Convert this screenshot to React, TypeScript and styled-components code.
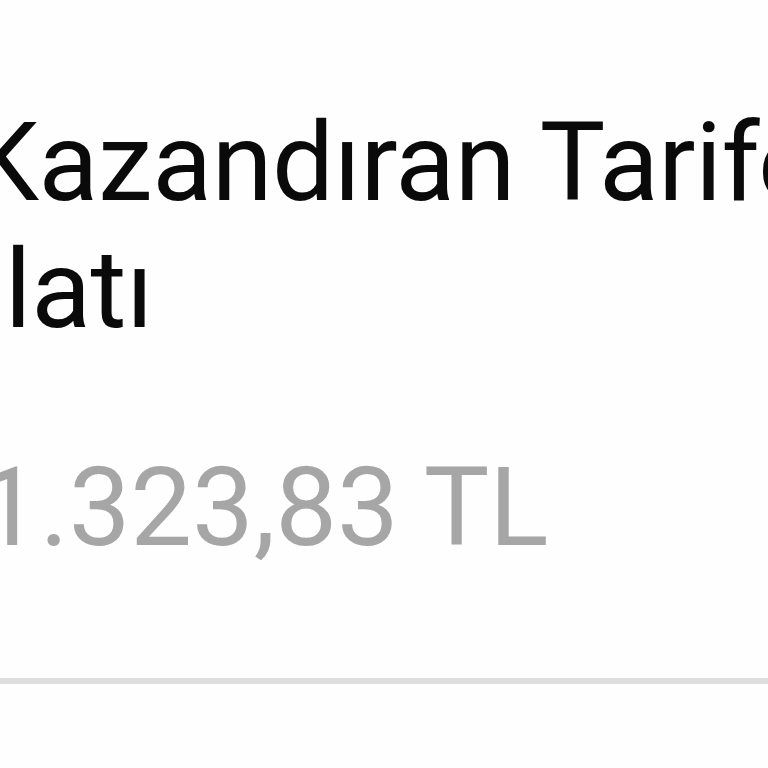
import React from 'react';
import styled, { createGlobalStyle } from 'styled-components';

const GlobalStyle = createGlobalStyle`
  html, body {
    margin: 0;
    padding: 0;
    background: #fefefe;
  }
  body {
    font-family: Roboto, "Noto Sans", "Liberation Sans", sans-serif;
    overflow: hidden;
  }
`;

const Screen = styled.div`
  width: 768px;
  height: 768px;
  overflow: hidden;
  display: flex;
  flex-direction: column;
  background: #fefefe;
`;

const Item = styled.div`
  display: flex;
  flex-direction: column;
  padding-top: 99px;
  margin-left: -22px;
`;

const Title = styled.div`
  display: flex;
  flex-direction: column;
  margin-left: -8px;
  font-size: 110px;
  line-height: 127px;
  font-weight: 400;
  letter-spacing: -0.4px;
  color: #0a0a0a;
  white-space: nowrap;
`;

const TitleLine = styled.span<{ $indent?: number }>`
  padding-left: ${(p) => p.$indent ?? 0}px;
`;

const Price = styled.div`
  margin-top: 90px;
  font-size: 110px;
  line-height: 129px;
  font-weight: 400;
  letter-spacing: -0.1px;
  color: #a6a6a6;
  white-space: nowrap;
`;

const Divider = styled.div`
  margin-top: 106px;
  height: 6px;
  background: #dedede;
`;

const App: React.FC = () => {
  return (
    <>
      <GlobalStyle />
      <Screen>
        <Item>
          <Title>
            <TitleLine>Kazandıran Tarife</TitleLine>
            <TitleLine $indent={8}>ılatı</TitleLine>
          </Title>
          <Price>1.323,83 TL</Price>
        </Item>
        <Divider />
      </Screen>
    </>
  );
};

export default App;
